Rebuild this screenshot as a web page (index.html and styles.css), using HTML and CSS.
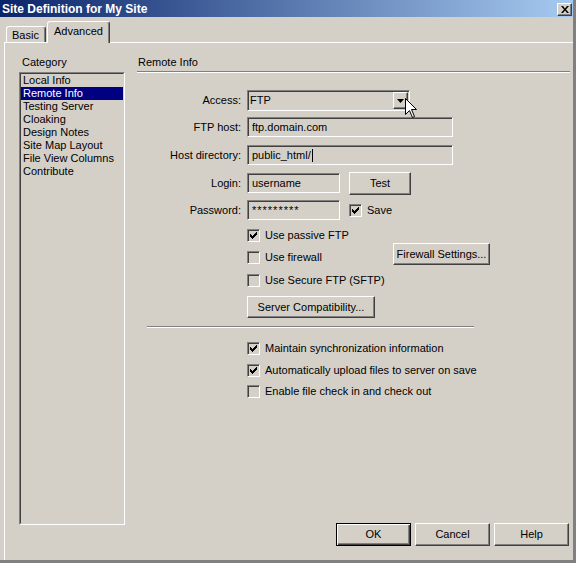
FILE: index.html
```html
<!DOCTYPE html>
<html>
<head>
<meta charset="utf-8">
<title>Site Definition for My Site</title>
<link rel="stylesheet" href="styles.css">
</head>
<body>
<div class="window">
  <div class="titlebar">
    <span class="title">Site Definition for My Site</span>
    <span class="close"><svg width="8" height="7" viewBox="0 0 8 7"><path d="M0 0h2l2 2.4L6 0h2L5 3.5 8 7H6L4 4.6 2 7H0l3-3.5z"/></svg></span>
  </div>
  <div class="body">
    <div class="tabs">
      <div class="tab">Basic</div>
      <div class="tab active">Advanced</div>
    </div>
    <div class="panel">
      <div class="category">
        <div class="cat-label">Category</div>
        <div class="listbox">
          <ul class="list">
            <li>Local Info</li>
            <li class="selected">Remote Info</li>
            <li>Testing Server</li>
            <li>Cloaking</li>
            <li>Design Notes</li>
            <li>Site Map Layout</li>
            <li>File View Columns</li>
            <li>Contribute</li>
          </ul>
        </div>
      </div>
      <div class="remote">
        <div class="section-title">Remote Info</div>
        <div class="rule"></div>

        <div class="field field-access">
          <span class="lbl">Access:</span>
          <div class="input select">
            <span>FTP</span>
            <span class="drop"><svg width="7" height="4" viewBox="0 0 7 4"><path d="M0 0h7L3.5 4z"/></svg></span>
            <svg class="cursor" width="13" height="21" viewBox="0 0 13 21"><path d="M0.5 0.5V16.5L4.5 12.5L7.5 19.5L9.5 18.5L6.5 11.5H11.5Z" fill="#fff" stroke="#000" stroke-width="1"/></svg>
          </div>
        </div>
        <div class="field field-host">
          <span class="lbl">FTP host:</span>
          <div class="input w-wide">ftp.domain.com</div>
        </div>
        <div class="field field-dir">
          <span class="lbl">Host directory:</span>
          <div class="input w-wide">public_html/<span class="caret"></span></div>
        </div>
        <div class="field field-login">
          <span class="lbl">Login:</span>
          <div class="input w-short">username</div>
          <button class="btn btn-test">Test</button>
        </div>
        <div class="field field-pass">
          <span class="lbl">Password:</span>
          <div class="input w-short pass">*********</div>
          <label class="cb cb-save"><span class="box"><svg width="7" height="7" viewBox="0 0 7 7"><path d="M0 2h1v3H0zM1 3h1v3H1zM2 4h1v3H2zM3 3h1v3H3zM4 2h1v3H4zM5 1h1v3H5zM6 0h1v3H6z"/></svg></span>Save</label>
        </div>

        <div class="checks">
          <div class="checks-col">
            <label class="cb"><span class="box"><svg width="7" height="7" viewBox="0 0 7 7"><path d="M0 2h1v3H0zM1 3h1v3H1zM2 4h1v3H2zM3 3h1v3H3zM4 2h1v3H4zM5 1h1v3H5zM6 0h1v3H6z"/></svg></span>Use passive FTP</label>
            <label class="cb cb-firewall"><span class="box"></span>Use firewall</label>
            <label class="cb cb-secure"><span class="box"></span>Use Secure FTP (SFTP)</label>
          </div>
          <button class="btn btn-firewall">Firewall Settings...</button>
        </div>
        <button class="btn btn-server">Server Compatibility...</button>
        <div class="sep"></div>
        <div class="checks2">
          <label class="cb"><span class="box"><svg width="7" height="7" viewBox="0 0 7 7"><path d="M0 2h1v3H0zM1 3h1v3H1zM2 4h1v3H2zM3 3h1v3H3zM4 2h1v3H4zM5 1h1v3H5zM6 0h1v3H6z"/></svg></span>Maintain synchronization information</label>
          <label class="cb cb-auto"><span class="box"><svg width="7" height="7" viewBox="0 0 7 7"><path d="M0 2h1v3H0zM1 3h1v3H1zM2 4h1v3H2zM3 3h1v3H3zM4 2h1v3H4zM5 1h1v3H5zM6 0h1v3H6z"/></svg></span>Automatically upload files to server on save</label>
          <label class="cb cb-enable"><span class="box"></span>Enable file check in and check out</label>
        </div>

        <div class="footer">
          <button class="btn btn-dlg btn-default">OK</button>
          <button class="btn btn-dlg">Cancel</button>
          <button class="btn btn-dlg">Help</button>
        </div>
      </div>
    </div>
  </div>
</div>
</body>
</html>
```
FILE: styles.css
```css
* { box-sizing: border-box; }
html, body { margin: 0; padding: 0; }
body {
  width: 576px;
  height: 563px;
  overflow: hidden;
  background: #d4d0c8;
  font-family: "Liberation Sans", Arial, sans-serif;
  font-size: 11px;
  line-height: 13px;
  color: #000;
}
.window {
  width: 576px;
  height: 563px;
  display: flex;
  flex-direction: column;
  background: #d4d0c8;
  border-right: 3px solid #808080;
  border-bottom: 3px solid #808080;
}
.titlebar {
  flex: none;
  height: 17px;
  display: flex;
  justify-content: space-between;
  align-items: flex-start;
  padding-left: 2px;
  background: linear-gradient(to right, #0a246a, #a6caf0);
}
.title {
  color: #fff;
  font-weight: bold;
  font-size: 12px;
  line-height: 15px;
  padding-top: 2px;
  white-space: nowrap;
}
.close {
  width: 15px;
  height: 13px;
  margin: 3px 1px 0 0;
  background: #d4d0c8;
  border: 1px solid;
  border-color: #fff #404040 #404040 #fff;
  box-shadow: inset -1px -1px #808080;
  display: flex;
  align-items: center;
  justify-content: center;
}
.close svg { display: block; }
.body {
  flex: 1;
  min-height: 0;
  display: flex;
  flex-direction: column;
  padding: 4px 0 0 4px;
}
.tabs {
  flex: none;
  height: 21px;
  display: flex;
  align-items: flex-end;
  padding-left: 2px;
}
.tab {
  width: 40px;
  height: 16px;
  padding: 2px 0 0 5px;
  border: 1px solid #fff;
  border-bottom: none;
  border-right-color: #404040;
  box-shadow: inset -1px 0 #808080;
  border-radius: 3px 3px 0 0;
  white-space: nowrap;
  background: #d4d0c8;
}
.tab.active {
  width: 63px;
  height: 22px;
  padding: 3px 0 0 6px;
  margin-left: 1px;
  margin-bottom: -1px;
  position: relative;
  z-index: 1;
}
.panel {
  flex: 1;
  min-height: 0;
  display: flex;
  border-top: 1px solid #fff;
  border-left: 1px solid #fff;
}
.category {
  flex: none;
  width: 132px;
  padding: 13px 0 0 14px;
}
.cat-label { padding-left: 3px; }
.listbox {
  margin-top: 3px;
  width: 106px;
  height: 453px;
  border: 1px solid;
  border-color: #808080 #fff #fff #808080;
}
.list {
  margin: 0;
  padding: 0;
  list-style: none;
  height: 100%;
  border: 1px solid;
  border-color: #404040 #d4d0c8 #d4d0c8 #404040;
}
.list li {
  height: 13px;
  padding-left: 2px;
  white-space: nowrap;
}
.list li.selected {
  background: #000080;
  color: #fff;
}
.remote {
  flex: 1;
  min-width: 0;
  display: flex;
  flex-direction: column;
  padding: 13px 0 14px 0;
}
.section-title { padding-left: 1px; }
.rule {
  height: 2px;
  margin: 2px 3px 0 0;
  border-top: 1px solid #808080;
  border-bottom: 1px solid #fff;
}
.field {
  display: flex;
  align-items: center;
  height: 20px;
}
.field-access { height: 21px; margin-top: 17px; margin-bottom: 6px; }
.field-host { margin-bottom: 8px; }
.field-dir { margin-bottom: 8px; }
.field-login { margin-bottom: 7px; }
.lbl {
  flex: none;
  width: 104px;
  margin-right: 6px;
  text-align: right;
  white-space: nowrap;
}
.input {
  flex: none;
  height: 20px;
  padding: 0 4px;
  display: flex;
  align-items: center;
  white-space: nowrap;
  border: 1px solid;
  border-color: #808080 #fff #fff #808080;
  box-shadow: inset 1px 1px #404040, inset -1px -1px #d4d0c8;
  background: #d4d0c8;
}
.w-wide { width: 206px; }
.w-short { width: 93px; }
.pass { letter-spacing: 1px; }
.select {
  position: relative;
  width: 163px;
  height: 21px;
  padding: 0 1px 0 2px;
  justify-content: space-between;
}
.drop {
  width: 15px;
  height: 17px;
  display: flex;
  align-items: center;
  justify-content: center;
  background: #d4d0c8;
  border: 1px solid;
  border-color: #fff #404040 #404040 #fff;
  box-shadow: inset -1px -1px #808080;
}
.drop svg { display: block; }
.cursor {
  position: absolute;
  left: 157px;
  top: 7px;
}
.caret {
  display: inline-block;
  width: 1px;
  height: 13px;
  margin-left: 1px;
  background: #000;
}
.btn {
  flex: none;
  height: 22px;
  padding: 0;
  margin: 0;
  font: inherit;
  color: #000;
  background: #d4d0c8;
  border: 1px solid;
  border-color: #fff #404040 #404040 #fff;
  box-shadow: inset -1px -1px #808080;
  border-radius: 0;
  display: flex;
  align-items: center;
  justify-content: center;
  white-space: nowrap;
}
.btn-test { width: 62px; height: 23px; margin-left: 9px; }
.cb {
  display: flex;
  align-items: center;
  gap: 5px;
  height: 13px;
  white-space: nowrap;
}
.cb-save { margin-left: 9px; }
.box {
  flex: none;
  width: 13px;
  height: 13px;
  padding: 2px;
  border: 1px solid;
  border-color: #808080 #fff #fff #808080;
  box-shadow: inset 1px 1px #404040, inset -1px -1px #d4d0c8;
  background: #d4d0c8;
}
.box svg { display: block; }
.checks {
  display: flex;
  margin: 9px 0 0 110px;
}
.checks-col {
  width: 146px;
  display: flex;
  flex-direction: column;
}
.cb-firewall { margin-top: 9px; }
.cb-secure { margin-top: 10px; }
.btn-firewall { width: 97px; margin-top: 14px; }
.btn-server {
  align-self: flex-start;
  width: 128px;
  margin: 9px 0 0 110px;
}
.sep {
  width: 327px;
  height: 2px;
  margin: 8px 0 0 10px;
  border-top: 1px solid #808080;
  border-bottom: 1px solid #fff;
}
.checks2 {
  display: flex;
  flex-direction: column;
  margin: 14px 0 0 110px;
}
.cb-auto { margin-top: 9px; }
.cb-enable { margin-top: 8px; }
.footer {
  margin-top: auto;
  display: flex;
  justify-content: flex-end;
  gap: 4px;
  padding-right: 4px;
}
.btn-dlg { width: 75px; height: 23px; }
.btn-default {
  border: 1px solid #000;
  box-shadow: inset 1px 1px #fff, inset -1px -1px #404040, inset -2px -2px #808080;
}
```
